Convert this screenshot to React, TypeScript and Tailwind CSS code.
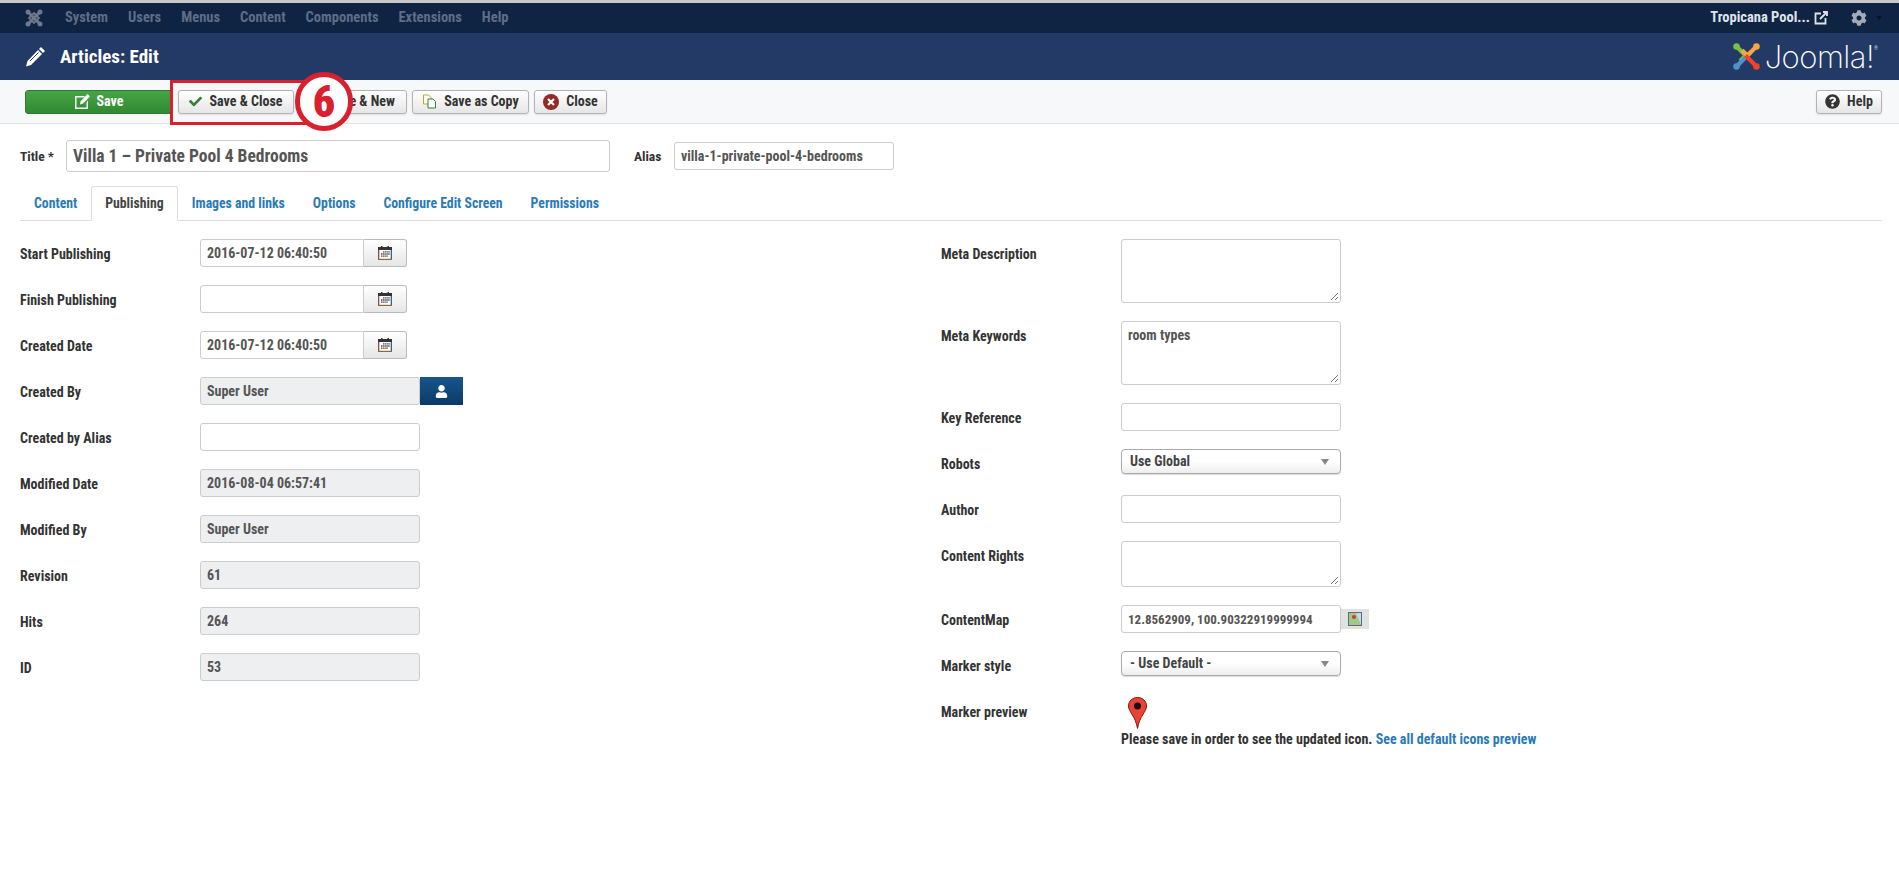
import { FaCheck, FaCog, FaPlus, FaQuestionCircle, FaUser } from 'react-icons/fa'

const JoomlaMark = ({ size }: { size: number }) => (
  <svg width={size} height={size} viewBox="0 0 32 32" fill="none" strokeWidth="4.600" strokeLinejoin="round">
    <path d="M5 5 L15 15 L9 21" stroke="#7ac143" />
    <path d="M5 27 L11 21 L21 11" stroke="#5091cd" />
    <path d="M27 5 L17 15 L11 9" stroke="#f9a541" />
    <path d="M27 27 L15 15" stroke="#f44321" />
    <circle cx="5" cy="5" r="3.600" fill="#7ac143" />
    <circle cx="27" cy="5" r="3.600" fill="#f9a541" />
    <circle cx="27" cy="27" r="3.600" fill="#f44321" />
    <circle cx="5" cy="27" r="3.600" fill="#5091cd" />
  </svg>
)

const JoomlaMono = () => (
  <svg width="18" height="18" viewBox="0 0 18 18" fill="none" stroke="#6f7889" strokeWidth="3">
    <path d="M3 3l12 12M15 3L3 15" />
    <path d="M9 4l5 5-5 5-5-5z" strokeWidth="1.800" />
    <circle cx="3" cy="3" r="2.500" fill="#6f7889" stroke="none" />
    <circle cx="15" cy="3" r="2.500" fill="#6f7889" stroke="none" />
    <circle cx="3" cy="15" r="2.500" fill="#6f7889" stroke="none" />
    <circle cx="15" cy="15" r="2.500" fill="#6f7889" stroke="none" />
  </svg>
)

const CalendarIcon = () => (
  <svg width="14" height="14" viewBox="0 0 14 14">
    <rect x="0" y="1" width="14" height="13" fill="#fff" />
    <rect x="0" y="1" width="1.300" height="13" fill="#8c4a42" />
    <rect x="12.700" y="1" width="1.300" height="13" fill="#3a5f85" />
    <rect x="0" y="1" width="14" height="3" fill="#333" />
    <rect x="3" y="0" width="1.500" height="2" fill="#333" />
    <rect x="9.500" y="0" width="1.500" height="2" fill="#333" />
    <rect x="0" y="12.800" width="14" height="1.200" fill="#8a6a3c" />
    <path d="M5 5.800h7M3 8h9M3 10.200h7" stroke="#444" strokeWidth="1.300" strokeDasharray="1.500 .6" />
  </svg>
)

const Btn = ({ icon, label, className = '' }: { icon: React.ReactNode; label: string; className?: string }) => (
  <button className={`flex h-6 items-center justify-center gap-[7px] rounded-[3px] border border-[#b3b3b3] bg-gradient-to-b from-white to-[#e6e6e6] text-[14px] font-bold text-[#333] shadow-[0_1px_2px_rgba(0,0,0,0.1)] ${className}`}>
    {icon}
    {label}
  </button>
)

const inputCls = 'h-7 rounded-[3px] border border-[#ccc] px-[6px] text-[14px] font-bold leading-[27px] text-[#555]'

const Row = ({ label, children }: { label: string; children?: React.ReactNode }) => (
  <div className="mb-[18px] flex min-h-7">
    <label className="w-[180px] shrink-0 pt-[4.500px] text-[14px] font-bold text-[#333]">{label}</label>
    {children}
  </div>
)

const DateInput = ({ value }: { value?: string }) => (
  <div className="flex">
    <div className={`${inputCls} w-[164px] rounded-r-none bg-white`}>{value}</div>
    <button className="flex h-7 w-[43px] items-center justify-center rounded-r-[3px] border border-l-0 border-[#bbb] bg-gradient-to-b from-white to-[#e6e6e6]">
      <CalendarIcon />
    </button>
  </div>
)

const ReadOnly = ({ value }: { value: string }) => <div className={`${inputCls} w-[220px] bg-[#eeeff1]`}>{value}</div>

const Area = ({ h, value }: { h: string; value?: string }) => (
  <div className={`relative ${h} w-[220px] rounded-[3px] border border-[#ccc] px-[6px] pt-[3px] text-[14px] font-bold text-[#555]`}>
    {value}
    <svg className="absolute bottom-[1px] right-[1px]" width="9" height="9" viewBox="0 0 9 9" stroke="#777">
      <path d="M1 8 L8 1 M5 8 L8 5" />
    </svg>
  </div>
)

const Select = ({ value }: { value: string }) => (
  <div className="flex h-[25px] w-[220px] items-center justify-between rounded-[4px] border border-[#aaa] bg-gradient-to-b from-white from-50% to-[#eee] pl-2 pr-[11px] text-[14px] font-bold text-[#444] shadow-[0_1px_1px_rgba(0,0,0,0.15)]">
    {value}
    <span className="h-0 w-0 border-x-[4px] border-t-[6px] border-x-transparent border-t-[#888]" />
  </div>
)

export default function App() {
  return (
    <div className="relative min-h-[877px] bg-white font-['Roboto',sans-serif] [font-stretch:75%]">
      <div className="h-[3px] bg-[#c8c8c8]" />
      <nav className="flex h-[30px] items-center bg-[#0f2443] pl-[25px] pr-[17px] text-[14.500px] font-bold text-[#5f6d86]">
        <JoomlaMono />
        <div className="ml-[22px] flex gap-5">
          {['System', 'Users', 'Menus', 'Content', 'Components', 'Extensions', 'Help'].map((m) => (
            <span key={m}>{m}</span>
          ))}
        </div>
        <span className="ml-auto text-[#dfe3ea]">Tropicana Pool...</span>
        <svg className="ml-1" width="14" height="14" viewBox="0 0 14 14" fill="none" stroke="#dfe3ea" strokeWidth="1.800">
          <path d="M7 2.500H1.500v10h10V7M6 8l7-7M9 1h4v4" />
        </svg>
        <FaCog className="ml-[23px] text-[#a3abb8]" size={16} />
        <span className="ml-[9px] h-0 w-0 border-x-[3px] border-t-[4px] border-x-transparent border-t-[#0a1526]" />
      </nav>
      <header className="flex h-[47px] items-center bg-[#233a66] pl-[25px] pr-[21px] text-white">
        <svg width="21" height="21" viewBox="0 0 21 21">
          <path d="M16 1l4 4-2 2-4-4z" fill="#fff" />
          <path d="M13 4l4 4L6 19l-5 1.500L2.500 15z" fill="#fff" />
          <path d="M13.500 6.500L5 15" stroke="#233a66" strokeWidth="1" />
        </svg>
        <h1 className="mt-[2px] ml-[14px] text-[19px] font-bold">Articles: Edit</h1>
        <div className="ml-auto flex items-center">
          <JoomlaMark size={29} />
          <span className="ml-[4px] font-['Inter',sans-serif] text-[31px] leading-none font-[200] tracking-[-0.5px] text-white [font-stretch:100%]">Joomla!</span>
          <span className="mb-4 text-[5px] text-[#cfd5e0]">®</span>
        </div>
      </header>
      <div className="flex h-[44px] items-center gap-[5px] border-b border-[#e3e3e3] bg-[#f7f8fa] pl-[25px] pr-[17px]">
        <button className="flex h-6 w-[148px] items-center justify-center gap-[7px] rounded-[3px] border border-[#2c7a2e] bg-gradient-to-b from-[#46a546] to-[#2f8a32] text-[14px] font-bold text-white">
          <svg width="15" height="15" viewBox="0 0 15 15" fill="#fff">
            <path fillRule="evenodd" d="M0 2h10L8.500 3.500H1.500v10h10V8L13 6.500V15H0z" />
            <path d="M12.500 0L15 2.500 8 9.500 5 10.500 5.500 7.500z" />
          </svg>
          Save
        </button>
        <Btn className="w-[116px]" label="Save & Close" icon={<FaCheck size={13} color="#378137" />} />
        <Btn className="w-[108px]" label="Save & New" icon={<FaPlus size={11} color="#378137" />} />
        <Btn
          className="w-[117px]"
          label="Save as Copy"
          icon={
            <svg width="15" height="15" viewBox="0 0 15 15" fill="#fff">
              <path d="M1.500 1h5l2.500 2.500V10h-7.500z" stroke="#c2a52a" />
              <path d="M6 5h5l2.500 2.500V14H6z" stroke="#378137" />
            </svg>
          }
        />
        <Btn
          className="w-[73px]"
          label="Close"
          icon={
            <svg width="16" height="16" viewBox="0 0 16 16">
              <circle cx="8" cy="8" r="8" fill="#942a25" />
              <path d="M5 5l6 6M11 5l-6 6" stroke="#fff" strokeWidth="2.200" />
            </svg>
          }
        />
        <Btn className="ml-auto w-[66px]" label="Help" icon={<FaQuestionCircle size={15} color="#333" />} />
      </div>

      <main className="px-[17px] pt-4">
        <div className="flex items-center pl-[3px]">
          <label className="w-[46px] text-[13.500px] font-bold text-[#333]">Title *</label>
          <div className="flex h-8 w-[544px] items-center rounded-[3px] border border-[#ccc] px-[6px] text-[17.500px] leading-[24px] font-bold text-[#555]">
            Villa 1 – Private Pool 4 Bedrooms
          </div>
          <label className="ml-6 w-10 text-[13.500px] font-bold text-[#333]">Alias</label>
          <div className={`${inputCls} w-[220px]`}>villa-1-private-pool-4-bedrooms</div>
        </div>

        <div className="mt-[14px] ml-[3px] flex h-[35px] items-stretch border-b border-[#ddd] text-[13.750px] font-bold text-[#2a7ab8]">
          <span className="flex items-center px-[14px]">Content</span>
          <span className="-mb-px flex items-center rounded-t-[3px] border border-b-white border-[#ddd] bg-white px-[13px] text-[#444]">Publishing</span>
          <span className="flex items-center px-[14px]">Images and links</span>
          <span className="flex items-center px-[14px]">Options</span>
          <span className="flex items-center px-[14px]">Configure Edit Screen</span>
          <span className="flex items-center px-[14px]">Permissions</span>
        </div>

        <div className="mt-[18px] ml-[3px] flex">
          <div className="w-[921px]">
            <Row label="Start Publishing"><DateInput value="2016-07-12 06:40:50" /></Row>
            <Row label="Finish Publishing"><DateInput /></Row>
            <Row label="Created Date"><DateInput value="2016-07-12 06:40:50" /></Row>
            <Row label="Created By">
              <ReadOnly value="Super User" />
              <button className="flex h-7 w-[43px] items-center justify-center bg-gradient-to-b from-[#17568c] to-[#0b3a66]">
                <FaUser size={13} color="#fff" />
              </button>
            </Row>
            <Row label="Created by Alias"><div className={`${inputCls} w-[220px]`} /></Row>
            <Row label="Modified Date"><ReadOnly value="2016-08-04 06:57:41" /></Row>
            <Row label="Modified By"><ReadOnly value="Super User" /></Row>
            <Row label="Revision"><ReadOnly value="61" /></Row>
            <Row label="Hits"><ReadOnly value="264" /></Row>
            <Row label="ID"><ReadOnly value="53" /></Row>
          </div>
          <div className="flex-1">
            <Row label="Meta Description"><Area h="h-16" /></Row>
            <Row label="Meta Keywords"><Area h="h-16" value="room types" /></Row>
            <Row label="Key Reference"><div className={`${inputCls} w-[220px]`} /></Row>
            <Row label="Robots"><Select value="Use Global" /></Row>
            <Row label="Author"><div className={`${inputCls} w-[220px]`} /></Row>
            <Row label="Content Rights"><Area h="h-[46px]" /></Row>
            <Row label="ContentMap">
              <div className="h-7 w-[220px] rounded-[3px] border border-[#ccc] px-[6px] text-[13px] leading-[27px] font-bold text-[#555]">12.8562909, 100.90322919999994</div>
              <div className="mt-1 flex h-5 w-7 items-center justify-center bg-[#e0e2e2]">
                <svg width="14" height="14" viewBox="0 0 14 14">
                  <rect x="0.500" y="0.500" width="13" height="13" fill="#9fc98a" stroke="#667" />
                  <path d="M8 1h5v12z" fill="#bcdcf0" />
                  <circle cx="6" cy="5" r="2" fill="#d9352a" />
                </svg>
              </div>
            </Row>
            <Row label="Marker style"><Select value="- Use Default -" /></Row>
            <Row label="Marker preview">
              <div>
                <svg className="ml-[7px]" width="19" height="32" viewBox="0 0 19 32">
                  <path d="M9.500.5C4.500.5.500 4 .500 9c0 6 7 10 9 22.500C11.500 19 18.500 15 18.500 9c0-5-4-8.500-9-8.500z" fill="#ea4335" stroke="#7a1a12" />
                  <circle cx="9.500" cy="9" r="3.500" fill="#111" />
                </svg>
                <p className="text-[14px] font-bold text-[#333]">
                  Please save in order to see the updated icon. <a className="text-[#2a7ab8]">See all default icons preview</a>
                </p>
              </div>
            </Row>
          </div>
        </div>
      </main>

      <div className="absolute left-[170px] top-[80px] h-[45px] w-[137px] border-[3.500px] border-[#d9202f]" />
      <div className="absolute left-[295px] top-[72px] flex h-[59px] w-[58px] items-center justify-center rounded-full border-[5px] border-[#d9202f] bg-white text-[44px] font-black text-[#d9202f]">
        6
      </div>
    </div>
  )
}
